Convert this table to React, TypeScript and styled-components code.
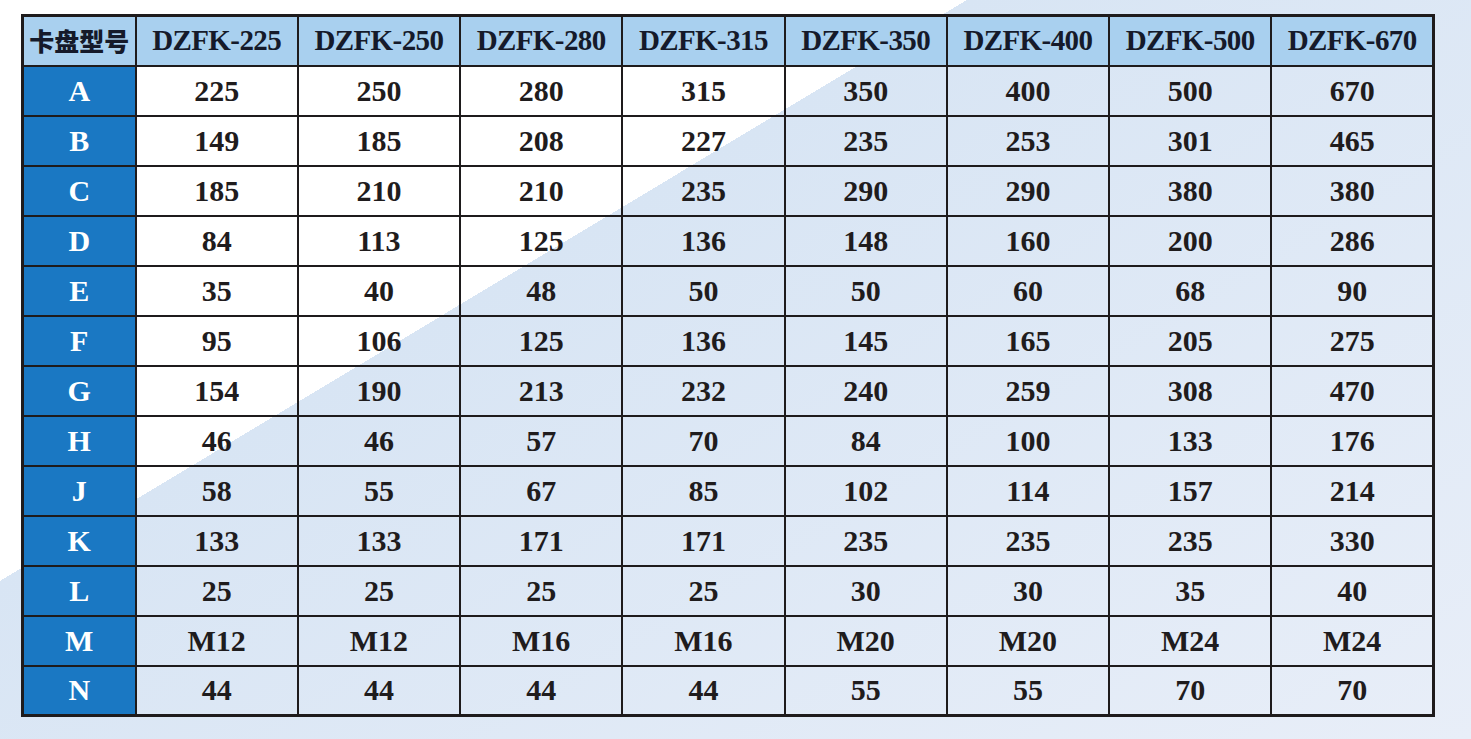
import React, { FunctionComponent } from 'react';
import styled, { createGlobalStyle } from 'styled-components';

const GlobalStyle = createGlobalStyle`
	html, body {
		margin: 0;
		padding: 0;
	}
	body {
		font-family: 'Liberation Serif', 'Times New Roman', serif;
		color: #1f1c1d;
	}
`;

const models = ['225', '250', '280', '315', '350', '400', '500', '670'];

const rows: [string, string[]][] = [
	['A', ['225', '250', '280', '315', '350', '400', '500', '670']],
	['B', ['149', '185', '208', '227', '235', '253', '301', '465']],
	['C', ['185', '210', '210', '235', '290', '290', '380', '380']],
	['D', ['84', '113', '125', '136', '148', '160', '200', '286']],
	['E', ['35', '40', '48', '50', '50', '60', '68', '90']],
	['F', ['95', '106', '125', '136', '145', '165', '205', '275']],
	['G', ['154', '190', '213', '232', '240', '259', '308', '470']],
	['H', ['46', '46', '57', '70', '84', '100', '133', '176']],
	['J', ['58', '55', '67', '85', '102', '114', '157', '214']],
	['K', ['133', '133', '171', '171', '235', '235', '235', '330']],
	['L', ['25', '25', '25', '25', '30', '30', '35', '40']],
	['M', ['M12', 'M12', 'M16', 'M16', 'M20', 'M20', 'M24', 'M24']],
	['N', ['44', '44', '44', '44', '55', '55', '70', '70']],
];

const Page = styled.div`
	width: 1471px;
	min-height: 739px;
	box-sizing: border-box;
	padding: 14px 0 0 21px;
	background: linear-gradient(149deg, #ffffff 498px, #d8e5f4 498px, #e8eef8 100%);
	overflow: hidden;
`;

const SpecTable = styled.table`
	width: 1414px;
	table-layout: fixed;
	border-collapse: collapse;
	border: 3px solid #1e1b1c;
`;

const Row = styled.tr`
	height: 50px;
`;

const Cell = styled.td`
	border: 2px solid #1e1b1c;
	padding: 0;
	text-align: center;
	vertical-align: middle;
	font-weight: bold;
	font-size: 30px;
	line-height: 1;
	background: transparent;
	color: #1f1c1d;
`;

const HeadCell = styled(Cell)`
	background: #a9d0ef;
	font-size: 29px;
	letter-spacing: -0.6px;
	color: #151a2a;
`;

const CornerCell = styled(HeadCell)`
	font-family: 'Noto Sans CJK SC', 'Liberation Serif', sans-serif;
	font-size: 25px;
	letter-spacing: 0;
	font-weight: 900;
	white-space: nowrap;
`;

const KeyCell = styled(Cell)`
	background: #1a78c3;
	color: #ffffff;
	font-size: 30px;
`;

const App: FunctionComponent = () => {
	return (
		<>
			<GlobalStyle />
			<Page>
				<SpecTable>
					<colgroup>
						<col style={{ width: 113 }} />
						{models.map((m) => (
							<col key={m} />
						))}
					</colgroup>
					<tbody>
						<Row>
							<CornerCell>卡盘型号</CornerCell>
							{models.map((m) => (
								<HeadCell key={m}>DZFK-{m}</HeadCell>
							))}
						</Row>
						{rows.map(([key, values]) => (
							<Row key={key}>
								<KeyCell>{key}</KeyCell>
								{values.map((v, i) => (
									<Cell key={i}>{v}</Cell>
								))}
							</Row>
						))}
					</tbody>
				</SpecTable>
			</Page>
		</>
	);
};

export default App;
